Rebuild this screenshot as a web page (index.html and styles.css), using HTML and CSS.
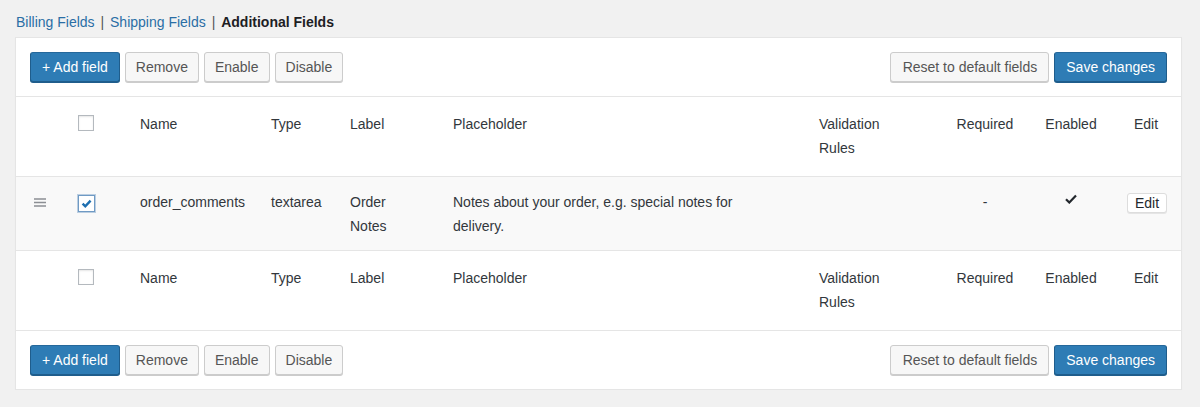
FILE: index.html
```html
<!DOCTYPE html>
<html lang="en">
<head>
<meta charset="utf-8">
<title>Additional Fields</title>
<link rel="stylesheet" href="styles.css">
</head>
<body>
<div class="page">
  <nav class="subsubsub">
    <a href="#" class="tab-link">Billing Fields</a>
    <span class="sep">|</span>
    <a href="#" class="tab-link">Shipping Fields</a>
    <span class="sep">|</span>
    <span class="current">Additional Fields</span>
  </nav>

  <div class="panel">
    <div class="toolbar">
      <div class="btn-group">
        <button class="btn btn-primary">+ Add field</button>
        <button class="btn">Remove</button>
        <button class="btn">Enable</button>
        <button class="btn">Disable</button>
      </div>
      <div class="btn-group">
        <button class="btn btn-wide">Reset to default fields</button>
        <button class="btn btn-primary">Save changes</button>
      </div>
    </div>

    <table class="fields">
      <colgroup>
        <col class="c-handle"><col class="c-cb"><col class="c-name"><col class="c-type"><col class="c-label"><col class="c-ph"><col class="c-val"><col class="c-req"><col class="c-en"><col class="c-edit">
      </colgroup>
      <thead>
        <tr class="head-row">
          <th class="handle"></th>
          <th class="cb"><span class="checkbox"></span></th>
          <th>Name</th>
          <th>Type</th>
          <th class="label">Label</th>
          <th class="ph">Placeholder</th>
          <th class="val">Validation Rules</th>
          <th class="center">Required</th>
          <th class="center">Enabled</th>
          <th class="edit-h">Edit</th>
        </tr>
      </thead>
      <tbody>
        <tr class="data-row">
          <td class="handle">
            <svg class="drag" width="12" height="9" viewBox="0 0 12 9"><path d="M0 1h12M0 4.5h12M0 8h12" stroke="#8c8f94" stroke-width="1.4"/></svg>
          </td>
          <td class="cb"><span class="checkbox checked"><svg width="13" height="13" viewBox="0 0 13 13"><path d="M2.6 6.6l2.7 2.7L10.6 3.6" fill="none" stroke="#1e6fb0" stroke-width="2.4"/></svg></span></td>
          <td>order_comments</td>
          <td>textarea</td>
          <td class="label">Order Notes</td>
          <td class="ph">Notes about your order, e.g. special notes for delivery.</td>
          <td class="val"></td>
          <td class="center dash">-</td>
          <td class="center"><svg class="tick" width="12" height="10" viewBox="0 0 12 10"><path d="M1 5.2l3.3 3.3L11 1.5" fill="none" stroke="#23282d" stroke-width="2.2"/></svg></td>
          <td class="edit"><button class="btn btn-small">Edit</button></td>
        </tr>
      </tbody>
      <tfoot>
        <tr class="head-row">
          <th class="handle"></th>
          <th class="cb"><span class="checkbox"></span></th>
          <th>Name</th>
          <th>Type</th>
          <th class="label">Label</th>
          <th class="ph">Placeholder</th>
          <th class="val">Validation Rules</th>
          <th class="center">Required</th>
          <th class="center">Enabled</th>
          <th class="edit-h">Edit</th>
        </tr>
      </tfoot>
    </table>

    <div class="toolbar">
      <div class="btn-group">
        <button class="btn btn-primary">+ Add field</button>
        <button class="btn">Remove</button>
        <button class="btn">Enable</button>
        <button class="btn">Disable</button>
      </div>
      <div class="btn-group">
        <button class="btn btn-wide">Reset to default fields</button>
        <button class="btn btn-primary">Save changes</button>
      </div>
    </div>
  </div>
</div>
</body>
</html>
```

FILE: styles.css
```css
html, body {
  margin: 0;
  padding: 0;
  background: #f1f1f1;
  font-family: "Liberation Sans", Arial, sans-serif;
  font-size: 14px;
  color: #32373c;
}

.page {
  padding: 12px 18px 0 15px;
}

.subsubsub {
  line-height: 20px;
  margin: 0 0 5px 1px;
  color: #555;
}

.tab-link {
  color: #2a6ea5;
  text-decoration: none;
}

.sep {
  margin: 0 2px;
  color: #555;
}

.current {
  font-weight: bold;
  color: #1d2024;
}

.panel {
  background: #fff;
  border: 1px solid #e5e5e5;
  box-shadow: 0 1px 1px rgba(0, 0, 0, 0.04);
}

.toolbar {
  display: flex;
  justify-content: space-between;
  padding: 14px 14px 14px 14px;
}

.btn-group {
  display: flex;
  gap: 5px;
}

.btn {
  font-family: inherit;
  font-size: 14px;
  height: 30px;
  line-height: 28px;
  padding: 0 10px;
  border: 1px solid #ccc;
  border-radius: 3px;
  background: #f7f7f7;
  color: #555;
  box-shadow: 0 1px 0 #ccc;
  cursor: pointer;
  white-space: nowrap;
}

.btn-wide {
  padding: 0 11px 0 12px;
}

.btn-primary {
  background: #2e7cb5;
  border-color: #25689b #1f5d8c #1f5d8c;
  color: #fff;
  box-shadow: 0 1px 0 #1f5d8c;
  padding: 0 11px;
}

.btn-small {
  height: 20px;
  line-height: 18px;
  padding: 0 7px;
  font-size: 14px;
  color: #23282d;
  background: #fff;
  border-color: #ddd;
  box-shadow: 0 1px 0 #e5e5e5;
}

.fields {
  width: 100%;
  table-layout: fixed;
  border-collapse: collapse;
}

.c-handle { width: 52px; }
.c-cb { width: 62px; }
.c-name { width: 131px; }
.c-type { width: 79px; }
.c-label { width: 103px; }
.c-ph { width: 366px; }
.c-val { width: 136px; }
.c-req { width: 80px; }
.c-en { width: 92px; }
.c-edit { width: 64px; }

.fields th,
.fields td {
  text-align: left;
  vertical-align: top;
  font-weight: normal;
  line-height: 24px;
  padding: 0 10px;
  color: #32373c;
}

.head-row th {
  padding-top: 15px;
  padding-bottom: 16px;
  border-top: 1px solid #e5e5e5;
}

.fields tfoot .head-row th {
  border-bottom: 1px solid #e5e5e5;
}

.data-row td {
  background: #f9f9f9;
  padding-top: 13px;
  padding-bottom: 12px;
  border-top: 1px solid #e5e5e5;
}

.fields .handle {
  padding-left: 18px;
  padding-right: 0;
}

.drag {
  display: block;
  margin-top: 8px;
}

.fields .label { padding-right: 33px; }
.fields .ph { padding-right: 46px; }
.fields .val { padding-right: 46px; }
.fields .center { text-align: center; }
.fields .edit { padding-left: 10px; padding-right: 0; }
.fields .edit-h { padding-left: 17px; padding-right: 0; }

.dash { color: #555; }

.tick {
  display: inline-block;
  margin-top: 4px;
  vertical-align: top;
}

.checkbox {
  display: block;
  box-sizing: border-box;
  width: 16px;
  height: 16px;
  margin-top: 3px;
  border: 1px solid #b4b9be;
  background: #fff;
  box-shadow: inset 0 1px 2px rgba(0, 0, 0, 0.1);
}

.checkbox.checked {
  width: 17px;
  height: 17px;
  margin-top: 5px;
  border: 1px solid #6f9ac4;
  box-shadow: 0 0 0 1px rgba(111, 154, 196, 0.45);
  position: relative;
}

.checkbox.checked svg {
  position: absolute;
  left: 1px;
  top: 1px;
}

.edit .btn-small {
  margin-top: 3px;
}
```
